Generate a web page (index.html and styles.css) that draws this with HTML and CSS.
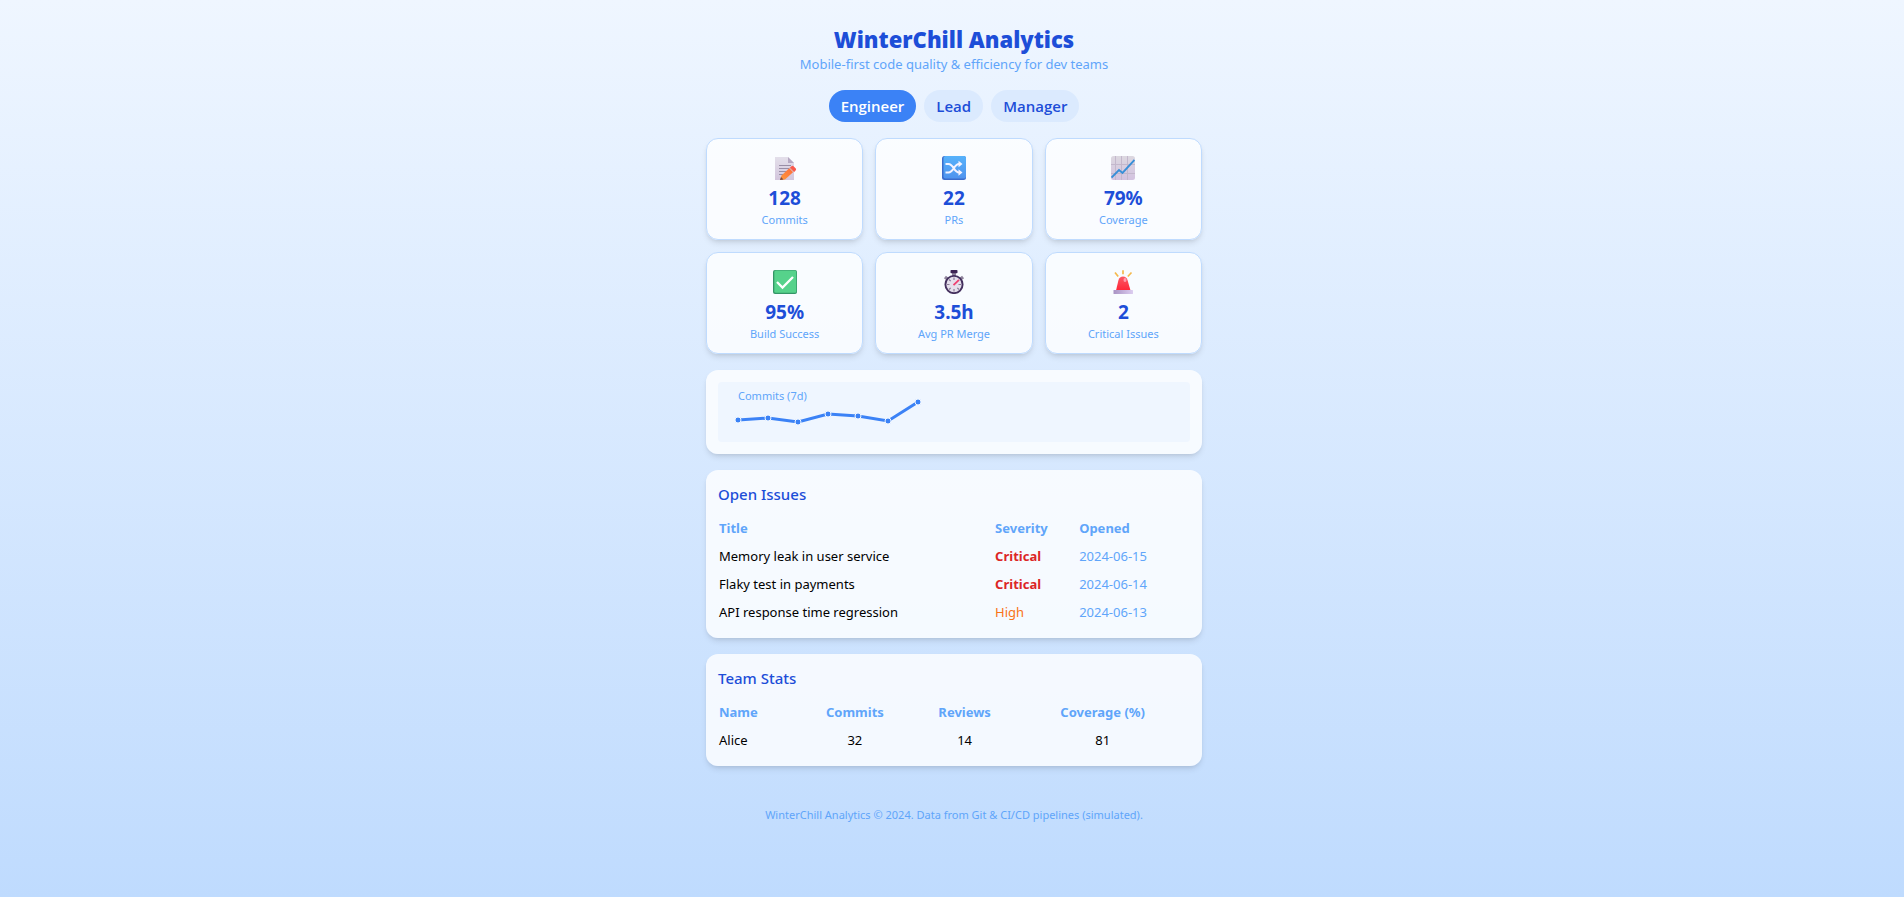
FILE: index.html
```html
<!DOCTYPE html>
<html lang="en">
<head>
<meta charset="utf-8">
<meta name="viewport" content="width=device-width, initial-scale=1">
<title>WinterChill Analytics</title>
<link rel="stylesheet" href="styles.css">
</head>
<body>
<div class="page">
  <header class="header">
    <h1 class="title">WinterChill Analytics</h1>
    <p class="subtitle">Mobile-first code quality &amp; efficiency for dev teams</p>
  </header>

  <nav class="tabs" aria-label="Role">
    <button type="button" class="tab tab-active" aria-pressed="true">Engineer</button>
    <button type="button" class="tab" aria-pressed="false">Lead</button>
    <button type="button" class="tab" aria-pressed="false">Manager</button>
  </nav>

  <main>
    <section class="metrics" aria-label="Metrics">
      <div class="metric">
        <svg class="icon" viewBox="0 0 24 24" aria-hidden="true">
          <defs>
            <linearGradient id="paper" x1="0" y1="0" x2="0" y2="1"><stop offset="0" stop-color="#e3dfea"/><stop offset="1" stop-color="#d3c6dd"/></linearGradient>
            <linearGradient id="pencil" x1="1" y1="0" x2="0" y2="1"><stop offset="0" stop-color="#ff6a3c"/><stop offset="1" stop-color="#ff9a3a"/></linearGradient>
          </defs>
          <path d="M2 1h13l6 6v17H2z" fill="url(#paper)"/>
          <path d="M15 1l6 6h-6z" fill="#b5a8c2"/>
          <path d="M6 9.500h12M6 12.500h12M6 15.500h9M6 18.500h5" stroke="#998ea6" stroke-width="1"/>
          <path d="M8.500 19.500L17 11.500l3.800 4L12 23.500l-5 .5z" fill="url(#pencil)"/>
          <path d="M7 24l1-3 2.500 2.600z" fill="#7b4a43"/>
          <path d="M17 11.500l1.500-1.300q1.200-.8 2.300.2l2 2.200q.8 1-.2 2l-1.300 1.400z" fill="#f9594c"/>
          <path d="M16.500 12l4 4.200" stroke="#d9c5cf" stroke-width="1"/>
        </svg>
        <div class="value">128</div>
        <div class="label">Commits</div>
      </div>
      <div class="metric">
        <svg class="icon" viewBox="0 0 24 24" aria-hidden="true">
          <defs><linearGradient id="blue" x1="0" y1="0" x2="0" y2="1"><stop offset="0" stop-color="#56b2fb"/><stop offset="1" stop-color="#4f93ee"/></linearGradient></defs>
          <rect width="24" height="24" rx="2.500" fill="#3b6ccc"/>
          <rect x="1.500" width="22.500" height="22.500" rx="2" fill="url(#blue)"/>
          <path d="M3.500 8h3c5 0 5.500 8.500 10.500 8.500M3.500 16.500h3c5 0 5.500-8.500 10.500-8.500" fill="none" stroke="#f5f3ff" stroke-width="2.200"/>
          <path d="M16.500 4.800L20.500 8l-4 3.200zM16.500 13.300l4 3.200-4 3.200z" fill="#f5f3ff"/>
        </svg>
        <div class="value">22</div>
        <div class="label">PRs</div>
      </div>
      <div class="metric">
        <svg class="icon" viewBox="0 0 24 24" aria-hidden="true">
          <defs><linearGradient id="sheet" x1="0" y1="0" x2="0" y2="1"><stop offset="0" stop-color="#dcd8e0"/><stop offset="1" stop-color="#d3c2e0"/></linearGradient></defs>
          <rect width="24" height="24" rx="2.500" fill="url(#sheet)"/>
          <path d="M4.500 0v24M10.500 0v24M16.500 0v24M0 8.500h24M0 17.500h24" stroke="#c3b8cc" stroke-width="1"/>
          <path d="M.5 21.500L8 14l3.500 3L23.500 4" fill="none" stroke="#378fd8" stroke-width="1.900"/>
        </svg>
        <div class="value">79%</div>
        <div class="label">Coverage</div>
      </div>
      <div class="metric">
        <svg class="icon" viewBox="0 0 24 24" aria-hidden="true">
          <rect width="24" height="24" rx="2" fill="#349567"/>
          <rect x="1.300" y=".5" width="22" height="22.200" rx="1.500" fill="#56d28b"/>
          <path d="M4 12l5.500 5.500L20 7" fill="none" stroke="#fff" stroke-width="2.300"/>
        </svg>
        <div class="value">95%</div>
        <div class="label">Build Success</div>
      </div>
      <div class="metric">
        <svg class="icon" viewBox="0 0 24 24" aria-hidden="true">
          <path d="M3.500 9.500l2-2.500M20.500 9.500l-2-2.500" stroke="#8e839b" stroke-width="4"/>
          <rect x="10" y="2" width="4" height="4" fill="#8e839b"/>
          <rect x="8.500" width="7" height="3.200" rx=".8" fill="#3d2454"/>
          <circle cx="12" cy="14.500" r="8.600" fill="#e5dfec" stroke="#44305e" stroke-width="1.900"/>
          <path d="M12 7.500v2.500M12 19v2.500M5 14.500h2.500M16.500 14.500H19M7 9.500l1.700 1.700M17 19.500l-1.700-1.700M7 19.500l1.700-1.700" stroke="#8b7d97" stroke-width="1.200"/>
          <path d="M11.500 15.200l5.500-5.300" stroke="#ef3e70" stroke-width="1.800"/>
        </svg>
        <div class="value">3.5h</div>
        <div class="label">Avg PR Merge</div>
      </div>
      <div class="metric">
        <svg class="icon" viewBox="0 0 24 24" aria-hidden="true">
          <defs>
            <linearGradient id="lamp" x1="0" y1="0" x2="0" y2="1"><stop offset="0" stop-color="#fb5964"/><stop offset="1" stop-color="#ff2638"/></linearGradient>
            <linearGradient id="base" x1="0" y1="0" x2="1" y2="0"><stop offset="0" stop-color="#a993c4"/><stop offset="1" stop-color="#dccdf0"/></linearGradient>
          </defs>
          <path d="M12 .3v4M4 2.500l3.200 4M20.500 2.500l-3.700 4" stroke="#f5b94d" stroke-width="1.700"/>
          <path d="M5 20.500L7.500 10Q8.500 6.500 12 6.500T16.500 10L19.500 20.500z" fill="url(#lamp)"/>
          <ellipse cx="14" cy="10" rx="1.500" ry="2" fill="#ff9cac"/>
          <rect x="2.500" y="20" width="19.500" height="4" rx=".6" fill="url(#base)"/>
        </svg>
        <div class="value">2</div>
        <div class="label">Critical Issues</div>
      </div>
    </section>

    <section class="card" aria-label="Commits chart">
      <div class="chart">
        <svg class="plot" width="220" height="60" role="img" aria-label="Commits over seven days">
          <text class="plot-label" x="20" y="18">Commits (7d)</text>
          <polyline class="plot-line" points="20,38 50,36 80,40 110,32 140,34 170,39 200,20"/>
          <g class="plot-dots">
            <circle cx="20" cy="38" r="3"/><circle cx="50" cy="36" r="3"/><circle cx="80" cy="40" r="3"/><circle cx="110" cy="32" r="3"/><circle cx="140" cy="34" r="3"/><circle cx="170" cy="39" r="3"/><circle cx="200" cy="20" r="3"/>
          </g>
        </svg>
      </div>
    </section>

    <section class="card">
      <h2 class="heading">Open Issues</h2>
      <table class="table issues">
        <colgroup><col class="issue-title"><col class="issue-severity"><col></colgroup>
        <thead><tr><th>Title</th><th>Severity</th><th>Opened</th></tr></thead>
        <tbody>
          <tr><td>Memory leak in user service</td><td class="critical">Critical</td><td class="date">2024-06-15</td></tr>
          <tr><td>Flaky test in payments</td><td class="critical">Critical</td><td class="date">2024-06-14</td></tr>
          <tr><td>API response time regression</td><td class="high">High</td><td class="date">2024-06-13</td></tr>
        </tbody>
      </table>
    </section>

    <section class="card">
      <h2 class="heading">Team Stats</h2>
      <table class="table team">
        <colgroup><col class="team-name"><col class="team-commits"><col class="team-reviews"><col></colgroup>
        <thead><tr><th>Name</th><th>Commits</th><th>Reviews</th><th>Coverage (%)</th></tr></thead>
        <tbody><tr><td>Alice</td><td>32</td><td>14</td><td>81</td></tr></tbody>
      </table>
    </section>
  </main>

  <footer class="footer">WinterChill Analytics © 2024. Data from Git &amp; CI/CD pipelines (simulated).</footer>
</div>
</body>
</html>
```
FILE: styles.css
```css
* { box-sizing: border-box; }

body {
  margin: 0;
  min-height: 100vh;
  padding-left: 4px;
  background: linear-gradient(to bottom, #eff6ff, #bfdbfe);
  color: #000;
  font-family: "Segoe UI", "Noto Sans", "Open Sans", sans-serif;
  font-size: 13px;
  line-height: 20px;
}

h1, h2, p { margin: 0; }

.page {
  max-width: 512px;
  margin: 0 auto;
  padding: 24px 8px;
}

.header { margin-bottom: 16px; text-align: center; }
.title, .tab { font-family: "Segoe UI", "Open Sans", "Noto Sans", sans-serif; }
.title { color: #1d4ed8; font-size: 22px; line-height: 30px; font-weight: 800; }
.subtitle { color: #60a5fa; }

.tabs { display: flex; justify-content: center; gap: 8px; margin-bottom: 16px; }
.tab {
  padding: 4px 12px;
  border: 0;
  border-radius: 16px;
  background: #dbeafe;
  color: #1d4ed8;
  font-size: 15px;
  font-weight: 600;
  line-height: 24px;
  cursor: pointer;
}
.tab-active { background: #3b82f6; color: #fff; }

.metrics {
  display: grid;
  grid-template-columns: repeat(3, 1fr);
  gap: 12px;
  margin-bottom: 16px;
}
.metric, .card {
  border-radius: 12px;
  background: rgba(255, 255, 255, 0.8);
  box-shadow: 0 4px 6px -1px rgba(0, 0, 0, 0.1), 0 2px 4px -2px rgba(0, 0, 0, 0.1);
}
.metric {
  display: flex;
  flex-direction: column;
  align-items: center;
  padding: 12px 12px 11px;
  border: 1px solid #bfdbfe;
}
.icon { width: 24px; height: 24px; margin: 5px 0 4px; }
.value { color: #1d4ed8; font-size: 19px; line-height: 28px; font-weight: 700; }
.label { color: #60a5fa; font-size: 11px; line-height: 16px; }

.card { margin-bottom: 16px; padding: 12px; }

.chart { height: 60px; border-radius: 4px; background: #eff6ff; }
.plot { display: block; }
.plot-label { fill: #60a5fa; font-size: 11px; }
.plot-line { fill: none; stroke: #3b82f6; stroke-width: 3; }
.plot-dots { fill: #3b82f6; stroke: #eff6ff; stroke-width: 1; }

.heading { margin-bottom: 8px; color: #1d4ed8; font-size: 15px; line-height: 24px; font-weight: 500; }

.table { width: 100%; table-layout: fixed; border-collapse: collapse; }
.table th, .table td { padding: 4px 1px; text-align: left; }
.table th { color: #60a5fa; font-weight: 700; }
.issue-title { width: 58.5%; }
.issue-severity { width: 17.8%; }
.team-name { width: 16.5%; }
.team-commits { width: 25%; }
.team-reviews { width: 21.5%; }
.team th:not(:first-child), .team td:not(:first-child) { text-align: center; }
.issues .critical { color: #dc2626; font-weight: 700; }
.issues .high { color: #f97316; }
.issues .date { color: #60a5fa; }

.footer { margin-top: 41px; color: #60a5fa; font-size: 11px; line-height: 16px; text-align: center; }
```
